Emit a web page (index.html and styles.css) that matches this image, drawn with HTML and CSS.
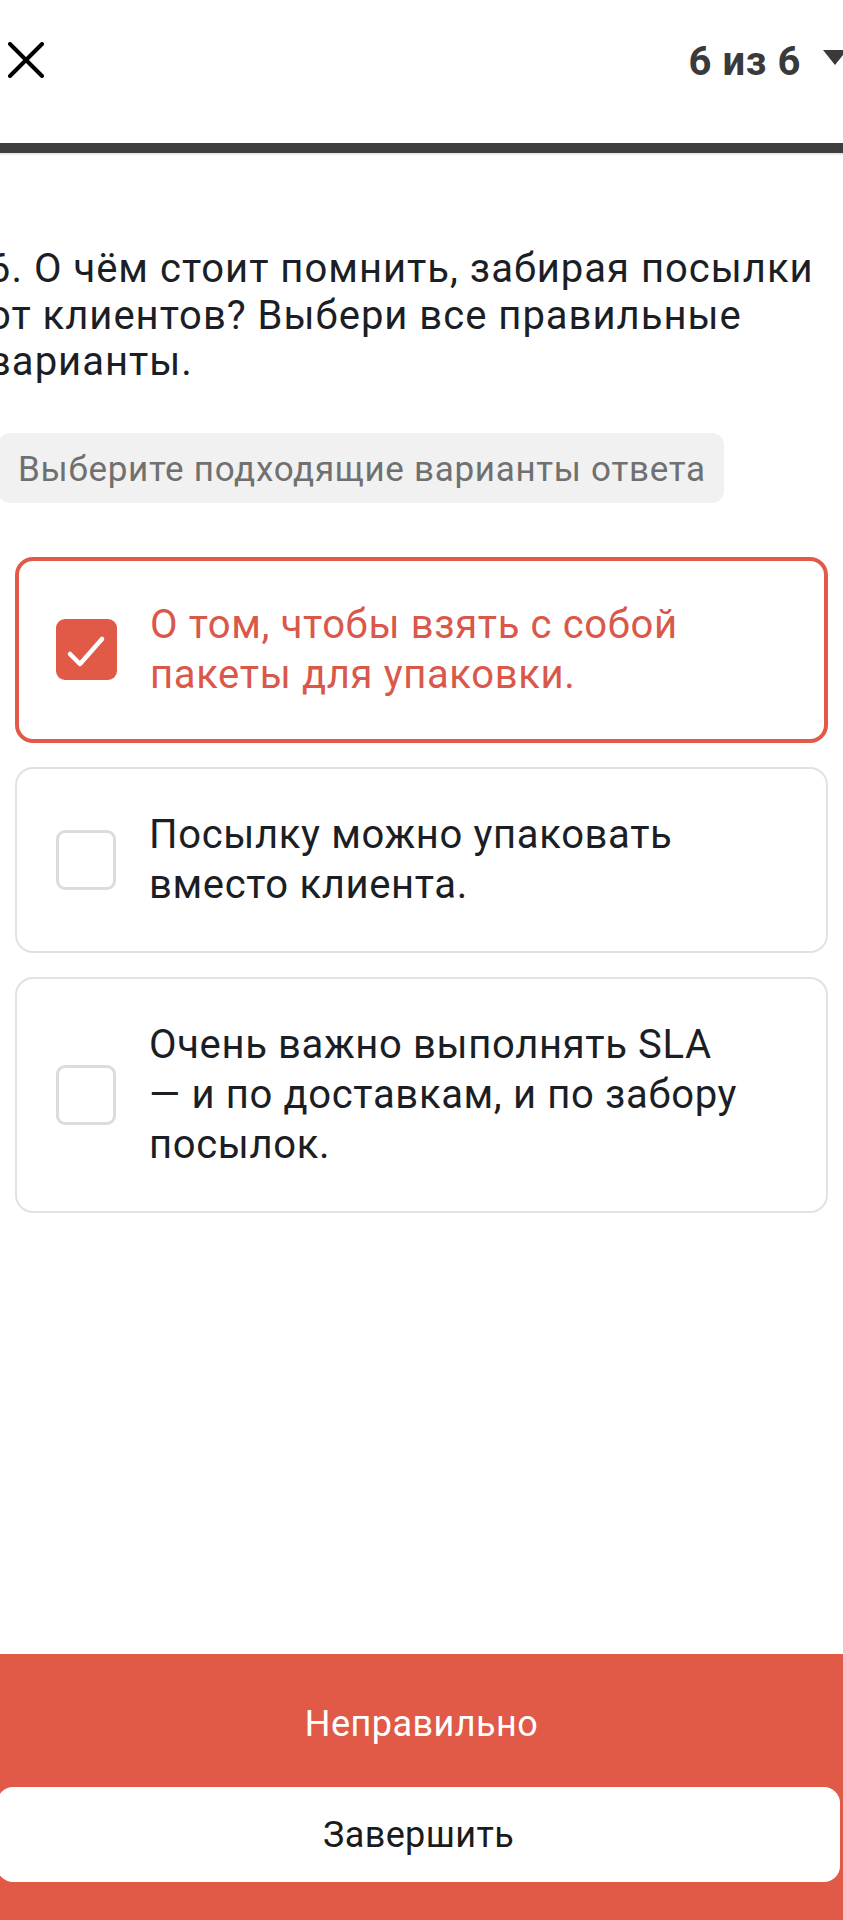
FILE: index.html
```html
<!DOCTYPE html>
<html lang="ru">
<head>
<meta charset="utf-8">
<title>Вопрос 6 из 6</title>
<link rel="stylesheet" href="styles.css">
</head>
<body>
<div class="page">
  <header class="topbar">
    <svg class="close" width="36" height="36" viewBox="0 0 36 36" aria-label="Закрыть">
      <path d="M2 2 L34 34 M34 2 L2 34" stroke="#000" stroke-width="4" stroke-linecap="round" fill="none"/>
    </svg>
    <div class="counter">
      <span class="counter-text">6 из 6</span>
      <svg class="caret" width="24" height="16" viewBox="0 0 24 16">
        <path d="M0 0 H24 L12 15 Z" fill="#3a3a3a"/>
      </svg>
    </div>
  </header>
  <div class="progress"><div class="progress-fill"></div></div>
  <div class="progress-shadow"></div>

  <main class="content">
    <h1 class="question">6. О чём стоит помнить, забирая посылки от клиентов? Выбери все правильные варианты.</h1>
    <div class="hint">Выберите подходящие варианты ответа</div>

    <div class="options">
      <div class="option option-selected">
        <svg class="check" width="61" height="61" viewBox="0 0 61 61">
          <rect x="0" y="0" width="61" height="61" rx="9" fill="#e05a47"/>
          <path d="M14 35 L24 45 L46 20" stroke="#fff" stroke-width="4.5" stroke-linecap="round" stroke-linejoin="round" fill="none"/>
        </svg>
        <div class="option-text">О том, чтобы взять с собой пакеты для упаковки.</div>
      </div>
      <div class="option">
        <div class="box"></div>
        <div class="option-text">Посылку можно упаковать вместо клиента.</div>
      </div>
      <div class="option">
        <div class="box"></div>
        <div class="option-text">Очень важно выполнять SLA — и по доставкам, и по забору посылок.</div>
      </div>
    </div>
  </main>

  <footer class="result">
    <div class="result-text">Неправильно</div>
    <button class="finish">Завершить</button>
  </footer>
</div>
</body>
</html>
```

FILE: styles.css
```css
* { box-sizing: border-box; }
html, body {
  margin: 0;
  padding: 0;
  background: #fff;
}
body {
  width: 843px;
  height: 1920px;
  overflow: hidden;
  font-family: Roboto, "Noto Sans", "Liberation Sans", sans-serif;
  color: #1b1e25;
}
.page {
  display: flex;
  flex-direction: column;
  height: 1920px;
}
.topbar {
  height: 143px;
  display: flex;
  justify-content: space-between;
  align-items: flex-start;
  padding: 39px 0 0 8px;
}
.close {
  display: block;
  margin-top: 3px;
}
.counter {
  display: flex;
  align-items: flex-start;
  gap: 22px;
  margin-right: -4px;
}
.counter-text {
  font-size: 40px;
  line-height: 46px;
  font-weight: 700;
  letter-spacing: 0.6px;
  color: #3a3a3a;
}
.caret {
  display: block;
  margin-top: 11px;
}
.progress {
  height: 10px;
  background: #e6e6e6;
}
.progress-fill {
  height: 100%;
  width: 100%;
  background: #3e3e3e;
}
.progress-shadow {
  height: 2px;
  background: #e9e9e9;
}
.content {
  flex: 1;
  display: flex;
  flex-direction: column;
  align-items: flex-start;
}
.question {
  margin: 91px 0 0 -12px;
  font-size: 40px;
  line-height: 46.5px;
  font-weight: 400;
  letter-spacing: 1px;
  color: #1b1e25;
}
.hint {
  margin: 47px 0 0 -2px;
  height: 70px;
  padding: 14px 18px 0 20px;
  border-radius: 12px;
  background: #f1f1f1;
  color: #707070;
  font-size: 35px;
  line-height: 46px;
  letter-spacing: 0.7px;
}
.options {
  align-self: stretch;
  margin: 54px 15px 0 15px;
  display: flex;
  flex-direction: column;
  gap: 24px;
}
.option {
  display: flex;
  align-items: center;
  gap: 33px;
  border: 2px solid #e2e2e2;
  border-radius: 18px;
  padding: 41px 39px;
  background: #fff;
}
.option-selected {
  border: 4px solid #e05a47;
  padding: 39px 37px;
}
.check {
  display: block;
  flex: none;
}
.box {
  flex: none;
  width: 60px;
  height: 60px;
  border: 3px solid #dcdcdc;
  border-radius: 9px;
  background: #fff;
}
.option-text {
  max-width: 600px;
  font-size: 40px;
  line-height: 50px;
  letter-spacing: 0.65px;
  color: #1b1e25;
}
.option-selected .option-text {
  color: #d9584a;
}
.result {
  height: 266px;
  background: #e05a47;
  display: flex;
  flex-direction: column;
  align-items: center;
  padding-top: 50px;
}
.result-text {
  color: #fff;
  font-size: 36px;
  line-height: 40px;
  letter-spacing: 0.45px;
}
.finish {
  margin: 43px 3px 0 -3px;
  align-self: stretch;
  height: 95px;
  border: none;
  border-radius: 16px;
  background: #fff;
  color: #1b1b1b;
  font-family: Roboto, "Noto Sans", "Liberation Sans", sans-serif;
  font-size: 36px;
  letter-spacing: 0.4px;
}
```
